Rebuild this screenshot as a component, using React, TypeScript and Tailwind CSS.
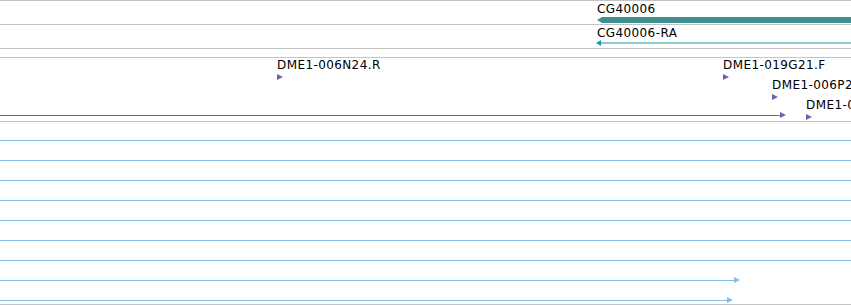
import React from "react";

// genome browser track view
const font = { fontFamily: '"DejaVu Sans", Verdana, sans-serif' };

function RightTri({ color }: { color: string }) {
  return (
    <svg width="6" height="6" viewBox="0 0 6 6" className="flex-none -ml-px">
      <polygon points="0,0 6,3 0,6" fill={color} />
    </svg>
  );
}

function Probe({ label, x, top }: { label: string; x: number; top: number }) {
  return (
    <div className="absolute flex flex-col gap-[2px]" style={{ left: x, top }}>
      <div className="text-[12px] leading-[14px] tracking-[0.4px] text-black whitespace-nowrap">{label}</div>
      <svg width="6" height="6" viewBox="0 0 6 6">
        <polygon points="0,0 6,3 0,6" fill="#6f5fb4" />
      </svg>
    </div>
  );
}

const fullRows = [19, 20, 20, 20, 20, 20, 20];

export default function App() {
  return (
    <div className="w-[851px] h-[305px] bg-white overflow-hidden flex flex-col" style={font}>
      <div className="h-px bg-[#c4c4c4]" />
      {/* gene */}
      <div className="h-[24px] border-b border-[#c4c4c4] pl-[597px] pt-[1px] flex flex-col gap-px">
        <div className="text-[12px] leading-[14px] tracking-[0.4px] text-black">CG40006</div>
        <svg width="260" height="6" className="flex-none">
          <polygon points="0,3 5,0 260,0 260,6 5,6" fill="#3d9090" />
        </svg>
      </div>
      {/* transcript */}
      <div className="h-[24px] border-b border-[#c4c4c4] pl-[596px] pt-[1px] flex flex-col">
        <div className="pl-px text-[12px] leading-[14px] tracking-[0.4px] text-black">CG40006-RA</div>
        <svg width="260" height="6" className="flex-none">
          <polygon points="0,3 5,0 5,6" fill="#1b98ae" />
          <rect x="4" y="2.5" width="256" height="1" fill="#1b98ae" />
        </svg>
      </div>
      <div className="h-[9px] border-b border-[#c4c4c4]" />
      {/* probes */}
      <div className="relative h-[64px] border-b border-[#c4c4c4] flex flex-col justify-end pb-[3px]">
        <Probe label="DME1-006N24.R" x={277} top={0} />
        <Probe label="DME1-019G21.F" x={723} top={0} />
        <Probe label="DME1-006P21.R" x={772} top={20} />
        <Probe label="DME1-006P22.F" x={806} top={40} />
        <div className="flex items-center">
          <div className="w-[781px] h-px bg-[#7160b6]" />
          <RightTri color="#7160b6" />
        </div>
      </div>
      {/* alignments */}
      <div className="h-[183px] border-b border-[#c4c4c4] flex flex-col">
        {fullRows.map((h, i) => (
          <div key={i} className="border-b border-[#87bde4]" style={{ height: h }} />
        ))}
        <div className="h-[20px] flex items-end">
          <div className="flex items-center translate-y-[2px]">
            <div className="w-[735px] h-px bg-[#87bde4]" />
            <RightTri color="#87bde4" />
          </div>
        </div>
        <div className="h-[20px] flex items-end">
          <div className="flex items-center translate-y-[2px]">
            <div className="w-[728px] h-px bg-[#87bde4]" />
            <RightTri color="#87bde4" />
          </div>
        </div>
      </div>
    </div>
  );
}
